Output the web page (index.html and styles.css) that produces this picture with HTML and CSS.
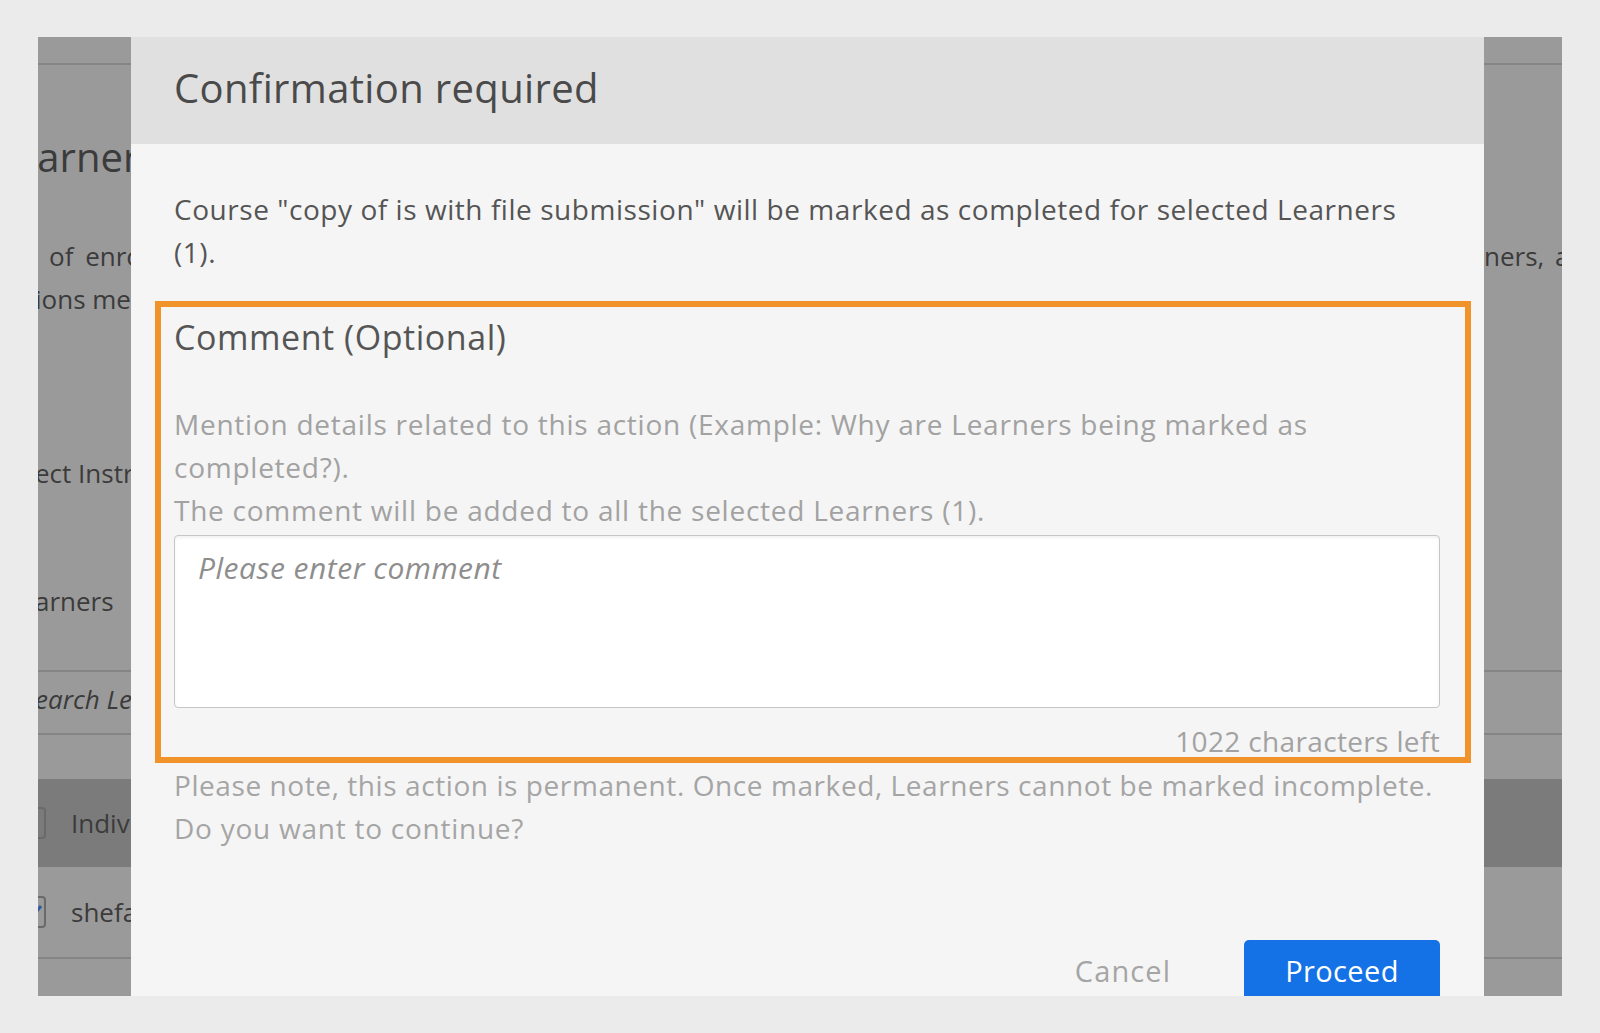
FILE: index.html
```html
<!DOCTYPE html>
<html lang="en">
<head>
<meta charset="utf-8">
<title>Confirmation required</title>
<link rel="stylesheet" href="styles.css">
</head>
<body>
<div class="frame">
  <div class="page" aria-hidden="true">
    <div class="top-bar"></div>
    <div class="rule"></div>
    <div class="page-title">Learners</div>
    <div class="row row-first"><span class="left intro">of enrolled</span><span class="right">ners, a</span></div>
    <div class="row"><span class="left cut">ions mentioned</span></div>
    <div class="row row-instructor"><span class="left cut">ect Instructor</span></div>
    <div class="row row-learners"><span class="left cut">arners</span></div>
    <div class="rule rule-search"></div>
    <div class="row row-search"><span class="left cut search">earch Learners</span></div>
    <div class="rule rule-after-search"></div>
    <div class="table-head"><div class="lead"><span class="check"></span><span class="cell">Individual</span></div></div>
    <div class="table-row"><div class="lead"><span class="check checked"><svg viewBox="0 0 24 32" width="24" height="32"><polyline points="5,16 10,21 19,10" fill="none" stroke="#2b5c9e" stroke-width="3"/></svg></span><span class="cell">shefali</span></div></div>
    <div class="rule"></div>
  </div>

  <div class="modal" role="dialog" aria-labelledby="dlg-title">
    <div class="modal-header">
      <h2 class="modal-title" id="dlg-title">Confirmation required</h2>
    </div>
    <div class="modal-body">
      <p class="message">Course "copy of is with file submission" will be marked as completed for selected Learners (1).</p>
      <div class="comment-box">
        <h3 class="comment-title">Comment (Optional)</h3>
        <div class="helper">
          <p>Mention details related to this action (Example: Why are Learners being marked as completed?).</p>
          <p>The comment will be added to all the selected Learners (1).</p>
        </div>
        <textarea class="comment-input" placeholder="Please enter comment"></textarea>
        <div class="char-count">1022 characters left</div>
      </div>
      <div class="note">
        <p class="note-line">Please note, this action is permanent. Once marked, Learners cannot be marked incomplete.</p>
        <p class="note-ask">Do you want to continue?</p>
      </div>
      <div class="actions">
        <button class="btn-cancel" type="button">Cancel</button>
        <button class="btn-proceed" type="button">Proceed</button>
      </div>
    </div>
  </div>
</div>
</body>
</html>
```

FILE: styles.css
```css
* { box-sizing: border-box; }
html, body { margin: 0; padding: 0; }
body {
  background: #ebebeb;
  font-family: "Open Sans", "Noto Sans", sans-serif;
  width: 1600px;
  height: 1033px;
  overflow: hidden;
}
.frame {
  position: relative;
  margin: 37px 0 0 38px;
  width: 1524px;
  height: 959px;
  background: #9a9a9a;
  overflow: hidden;
}

/* background page (dimmed) */
.page {
  color: #3b3b3b;
  font-size: 26px;
  line-height: 43px;
  white-space: nowrap;
}
.top-bar { height: 26px; }
.rule { height: 2px; background: #858585; }
.page-title {
  width: 93px;
  overflow: hidden;
  font-size: 40px;
  line-height: 48px;
  margin-top: 68px;
  text-indent: -44px;
}
.row { display: flex; justify-content: space-between; height: 43px; }
.row .left { flex: 0 0 93px; overflow: hidden; }
.row .right { flex: 0 0 78px; overflow: hidden; word-spacing: 4px; }
.row-first { margin-top: 54px; }
.intro { padding-left: 11px; word-spacing: 5px; }
.cut { text-indent: -3px; }
.row-instructor { margin-top: 131px; }
.row-learners { margin-top: 85px; }
.rule-search { margin-top: 47px; }
.row-search { margin-top: 6px; }
.search { font-style: italic; }
.rule-after-search { margin-top: 12px; }
.table-head, .table-row { display: flex; align-items: center; }
.table-head { margin-top: 44px; height: 88px; background: #7b7b7b; }
.table-row { height: 90px; }
.lead {
  width: 93px;
  overflow: hidden;
  display: flex;
  align-items: center;
  gap: 25px;
}
.check {
  flex: none;
  width: 24px;
  height: 32px;
  margin-left: -16px;
  border: 2px solid #6a6a6a;
  border-radius: 4px;
  display: flex;
  align-items: center;
  justify-content: center;
}
.check svg { display: block; flex: none; }
.cell { color: #3b3b3b; }

/* modal */
.modal {
  position: absolute;
  left: 93px;
  top: 0;
  width: 1353px;
  height: 959px;
  background: #f5f5f5;
  overflow: hidden;
}
.modal-header {
  height: 107px;
  background: #e0e0e0;
  padding: 26px 0 0 43px;
}
.modal-title {
  margin: 0;
  font-size: 40px;
  line-height: 50px;
  font-weight: 400;
  letter-spacing: 0.35px;
  color: #4a4a4a;
}
.modal-body {
  padding: 44px 44px 0 43px;
  font-size: 28px;
  line-height: 43px;
}
.modal-body p { margin: 0; }
.message { color: #555; letter-spacing: 0.55px; max-width: 1240px; }
.comment-box {
  margin: 27px -31px 0 -19px;
  border: 6px solid #f0932b;
  padding: 8px 25px 0 13px;
}
.comment-title {
  margin: 0;
  font-size: 34px;
  line-height: 44px;
  font-weight: 400;
  letter-spacing: 0.55px;
  color: #555;
}
.helper { margin-top: 44px; color: #a2a2a2; letter-spacing: 0.75px; max-width: 1240px; }
.comment-input {
  display: block;
  width: 100%;
  height: 173px;
  margin-top: 3px;
  padding: 10px 23px;
  border: 1px solid #c6c6c6;
  border-radius: 4px;
  background: #fff;
  box-shadow: inset 0 2px 3px rgba(0, 0, 0, 0.06);
  font: inherit;
  font-size: 30px;
  line-height: 43px;
  letter-spacing: 0.5px;
  color: #555;
  resize: none;
  outline: none;
}
.comment-input::placeholder { color: #8e8e8e; font-style: italic; opacity: 1; }
.char-count {
  margin-top: 17px;
  line-height: 32px;
  text-align: right;
  letter-spacing: 0.35px;
  color: #a2a2a2;
}
.note { margin-top: 1px; color: #a5a5a5; }
.note-line { white-space: nowrap; letter-spacing: 0.58px; }
.note-ask { letter-spacing: 0.75px; }
.actions {
  display: flex;
  justify-content: flex-end;
  gap: 51px;
  margin-top: 90px;
}
.actions button {
  font-family: inherit;
  font-size: 29px;
  height: 62px;
  line-height: 62px;
  padding: 0;
  border: 0;
  cursor: pointer;
}
.btn-cancel { width: 140px; background: transparent; color: #a5a5a5; letter-spacing: 1.1px; }
.btn-proceed {
  width: 196px;
  background: #1472e6;
  color: #fff;
  border-radius: 5px;
  letter-spacing: 0.4px;
}
```
